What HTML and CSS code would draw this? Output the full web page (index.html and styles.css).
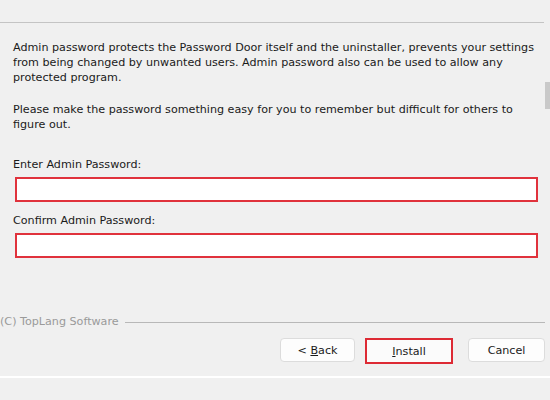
FILE: index.html
```html
<!DOCTYPE html>
<html>
<head>
<meta charset="utf-8">
<link rel="stylesheet" href="styles.css">
</head>
<body>
<div class="page">
  <div class="top-rule"></div>
  <div class="content">
    <p class="para">Admin password protects the Password Door itself and the uninstaller, prevents your settings from being changed by unwanted users. Admin password also can be used to allow any protected program.</p>
    <p class="para para2">Please make the password something easy for you to remember but difficult for others to figure out.</p>
    <label class="label label1">Enter Admin Password:</label>
    <div class="field"></div>
    <label class="label label2">Confirm Admin Password:</label>
    <div class="field"></div>
  </div>
  <div class="footer-line">
    <span class="brand">(C) TopLang Software</span>
    <span class="rule"></span>
  </div>
  <div class="buttons">
    <button class="btn btn-back">&lt; <u>B</u>ack</button>
    <button class="btn btn-install"><u>I</u>nstall</button>
    <button class="btn btn-cancel">Cancel</button>
  </div>
  <div class="bottom-rule"></div>
  <div class="scroll-thumb"></div>
</div>
</body>
</html>
```

FILE: styles.css
```css
html, body {
  margin: 0;
  padding: 0;
  background: #f0f0f0;
}
.page {
  position: relative;
  width: 550px;
  height: 400px;
  overflow: hidden;
  font-family: "DejaVu Sans", Verdana, sans-serif;
  font-size: 11.15px;
  color: #1a1a1a;
}
.top-rule {
  margin-top: 22px;
  margin-right: 6px;
  height: 1px;
  background: #c4c4c4;
}
.content {
  padding: 17px 6px 0 13px;
}
.para {
  margin: 0;
  line-height: 15px;
}
.para2 {
  margin-top: 17px;
}
.label {
  display: block;
  line-height: 15px;
}
.label1 {
  margin-top: 25px;
}
.label2 {
  margin-top: 11px;
}
.field {
  box-sizing: border-box;
  margin: 5px 0 0 2px;
  width: 523px;
  height: 25px;
  background: #fff;
  border: 2px solid #e0323c;
}
.footer-line {
  display: flex;
  align-items: center;
  margin-top: 57px;
  margin-right: 5px;
  color: #9a9a9a;
}
.brand {
  line-height: 14px;
}
.rule {
  flex: 1;
  height: 1px;
  background: #b8b8b8;
  margin-left: 6px;
}
.buttons {
  display: flex;
  align-items: flex-start;
  gap: 10px;
  margin: 9px 5px 0 280px;
  height: 25px;
}
.btn {
  font-family: "DejaVu Sans", Verdana, sans-serif;
  font-size: 11.15px;
  color: #1a1a1a;
  background: #fdfdfd;
  border: 1px solid #dcdcdc;
  border-radius: 4px;
  padding: 0;
  height: 24px;
}
.btn-back { width: 75px; }
.btn-install {
  width: 88px;
  height: 26px;
  border: 2px solid #dd2a34;
  border-radius: 0;
  background: #fbfbfb;
}
.btn-cancel {
  width: 77px;
  margin-left: 5px;
}
.bottom-rule {
  margin-top: 13px;
  height: 2px;
  background: #ffffff;
}
.scroll-thumb {
  position: absolute;
  left: 545px;
  top: 82px;
  width: 5px;
  height: 27px;
  background: #c9c9c9;
}
```
